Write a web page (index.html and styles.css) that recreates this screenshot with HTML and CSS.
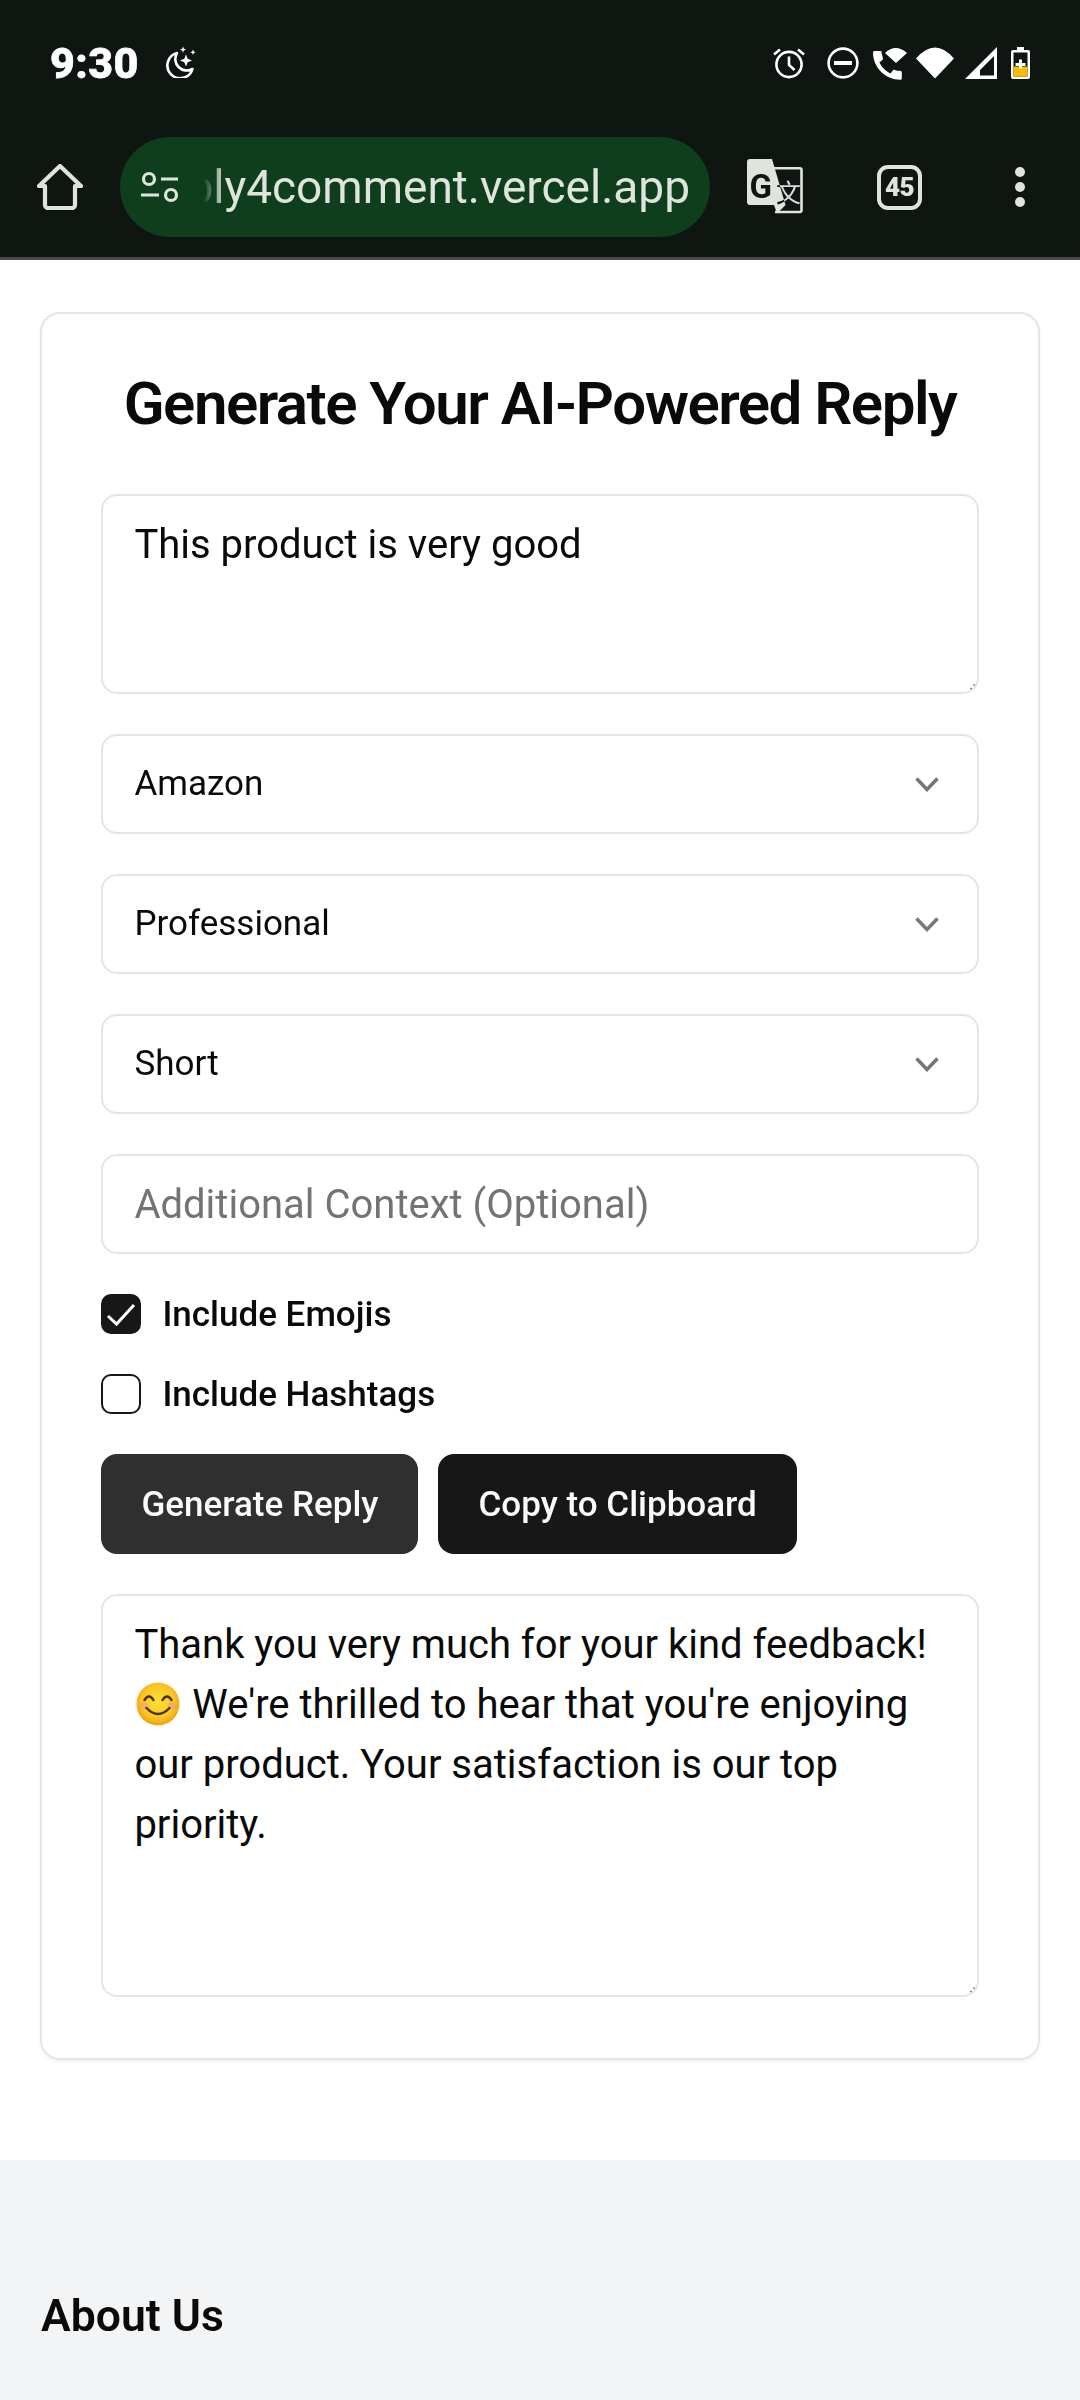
FILE: index.html
```html
<!DOCTYPE html>
<html lang="en">
<head>
<meta charset="utf-8">
<title>Reply4Comment</title>
<link rel="stylesheet" href="styles.css">
</head>
<body>
<header class="chrome">
  <div class="status">
    <span class="time">9:30</span>
    <svg class="ic-moon" viewBox="0 0 30 32"><path d="M11 7A12.800 12.800 0 1 0 26.500 23 11.500 11.500 0 0 1 11 7Z" fill="none" stroke="#fff" stroke-width="2.600" stroke-linejoin="round"/><path d="M20 8.500l1.700 4.300 4.300 1.700-4.300 1.700-1.700 4.300-1.700-4.300-4.300-1.700 4.300-1.700Z" fill="#fff"/><path d="M17 .5l.9 2.200 2.200.9-2.200.9-.9 2.200-.9-2.200-2.200-.9 2.200-.9Z" fill="#fff"/><path d="M27 3.500l.8 2 2 .8-2 .8-.8 2-.8-2-2-.8 2-.8Z" fill="#fff"/></svg>
    <div class="status-icons">
      <svg class="ic-alarm" viewBox="0 0 32 32"><circle cx="16" cy="17.500" r="12.600" fill="none" stroke="#fff" stroke-width="2.600"/><path d="M16 9.500v8.500l5.500 5" fill="none" stroke="#fff" stroke-width="2.600"/><path d="M1 7.500L7 2.500M31 7.500L25 2.500" stroke="#fff" stroke-width="2.600"/></svg>
      <svg class="ic-dnd" viewBox="0 0 32 32"><circle cx="16" cy="16" r="14.400" fill="none" stroke="#fff" stroke-width="2.600"/><rect x="7" y="14" width="18" height="4" fill="#fff"/></svg>
      <svg class="ic-call" viewBox="0 0 36 33"><path transform="translate(0 4) scale(1.600) translate(-3 -3)" d="M20.010 15.380c-1.230 0-2.420-.2-3.530-.56-.35-.12-.74-.03-1.010.24l-1.570 1.970c-2.830-1.350-5.480-3.900-6.890-6.830l1.950-1.660c.27-.28.35-.67.24-1.020-.37-1.110-.56-2.300-.56-3.530 0-.54-.45-.99-.99-.99H4.190C3.650 3 3 3.240 3 3.990 3 13.280 10.730 21 20.010 21c.71 0 .99-.63.99-1.180v-3.450c0-.54-.45-.99-.99-.99z" fill="#fff"/><path d="M11 6Q22-4 34 6L22.500 16.500Z" fill="#0f1511" stroke="#0f1511" stroke-width="4"/><path d="M12 6Q22.500-4 34 6L23 16Z" fill="#fff"/></svg>
      <svg class="ic-wifi" viewBox="0 0 38 32"><path d="M0 11.500Q19-10.500 38 11.500L19 31.500Z" fill="#fff"/></svg>
      <svg class="ic-signal" viewBox="0 0 32 32"><path d="M32 0V32H0Z M29 9L29 28.500 15 28.500 15 23Z" fill="#fff" fill-rule="evenodd"/></svg>
      <svg class="ic-batt" viewBox="0 0 19 32"><path d="M6 0h7v3h4a2 2 0 0 1 2 2v25a2 2 0 0 1-2 2H2a2 2 0 0 1-2-2V5a2 2 0 0 1 2-2h4Z" fill="#fff"/><rect x="2.500" y="5.500" width="14" height="24" fill="#0f1511"/><rect x="2.500" y="19.500" width="14" height="10" fill="#fbbc04"/><path d="M8 12.500h3v3.500h3.500v3H11v2.500H8V19H4.500v-3H8Z" fill="#fff"/></svg>
    </div>
  </div>
  <div class="toolbar">
    <svg class="ic-home" viewBox="0 0 46 46"><path d="M2 22L23 2 44 22H38V41a3 3 0 0 1-3 3H11a3 3 0 0 1-3-3V22Z" fill="none" stroke="#dfe4dc" stroke-width="4.200" stroke-linejoin="round"/></svg>
    <div class="omnibox">
      <svg class="ic-tune" viewBox="0 0 38 32"><circle cx="8" cy="8" r="5.500" fill="none" stroke="#dfe4dc" stroke-width="3.200"/><path d="M20 8H37M0 24H18" stroke="#dfe4dc" stroke-width="3.200"/><circle cx="30" cy="24" r="5.500" fill="none" stroke="#dfe4dc" stroke-width="3.200"/></svg>
      <div class="url"><span>reply4comment.vercel.app</span></div>
    </div>
    <svg class="ic-translate" viewBox="0 0 56 56"><path d="M25 9.300H53a1.500 1.500 0 0 1 1.500 1.500V51.500a1.500 1.500 0 0 1-1.500 1.500H28" fill="none" stroke="#dfe4dc" stroke-width="2.600"/><path d="M3 0H25L38.500 46 30 54.500 27 46H3a3 3 0 0 1-3-3V3a3 3 0 0 1 3-3Z" fill="#dfe4dc"/><text class="tr-g" x="2.500" y="38.500">G</text><text class="tr-x" x="29" y="43">文</text></svg>
    <div class="tabs">45</div>
    <div class="menu"><i></i><i></i><i></i></div>
  </div>
</header>

<main class="page">
  <section class="card">
    <h1 class="title">Generate Your AI-Powered Reply</h1>
    <form class="form">
      <div class="field-area small">
        <textarea class="area" spellcheck="false">This product is very good</textarea>
        <svg class="grip" viewBox="0 0 8 8"><path d="M6 1l1 1-1 1-1-1Z M3 4.500l1 1-1 1-1-1Z" fill="#555"/></svg>
      </div>
      <div class="select-wrap">
        <select class="select"><option>Amazon</option></select>
        <svg class="chev" viewBox="0 0 24 15"><path d="M1.500 1.500L12 12.500 22.500 1.500" fill="none" stroke="#777" stroke-width="3.500"/></svg>
      </div>
      <div class="select-wrap">
        <select class="select"><option>Professional</option></select>
        <svg class="chev" viewBox="0 0 24 15"><path d="M1.500 1.500L12 12.500 22.500 1.500" fill="none" stroke="#777" stroke-width="3.500"/></svg>
      </div>
      <div class="select-wrap">
        <select class="select"><option>Short</option></select>
        <svg class="chev" viewBox="0 0 24 15"><path d="M1.500 1.500L12 12.500 22.500 1.500" fill="none" stroke="#777" stroke-width="3.500"/></svg>
      </div>
      <input class="input" type="text" placeholder="Additional Context (Optional)">
      <label class="check">
        <span class="box on"><svg viewBox="0 0 40 40"><path d="M7 23L15.500 31 33 12" fill="none" stroke="#fff" stroke-width="3"/></svg></span>
        <span>Include Emojis</span>
      </label>
      <label class="check">
        <span class="box"></span>
        <span>Include Hashtags</span>
      </label>
      <div class="actions">
        <button type="button" class="btn soft">Generate Reply</button>
        <button type="button" class="btn">Copy to Clipboard</button>
      </div>
      <div class="field-area result">
        <div class="area-text">Thank you very much for your kind feedback! <svg class="emoji" viewBox="0 0 44 44"><defs><radialGradient id="face" cx="50%" cy="45%" r="55%"><stop offset="0" stop-color="#fde030"/><stop offset="0.7" stop-color="#f9c624"/><stop offset="1" stop-color="#f0a010"/></radialGradient></defs><circle cx="22" cy="22" r="21.500" fill="url(#face)"/><ellipse cx="7.500" cy="24" rx="5" ry="3.500" fill="#f29a7a" opacity=".6"/><ellipse cx="36.500" cy="24" rx="5" ry="3.500" fill="#f29a7a" opacity=".6"/><path d="M8.500 18Q13 11 17.500 18M26.500 18Q31 11 35.500 18M10.500 26Q22 38 33.500 26" fill="none" stroke="#4a3220" stroke-width="2.400" stroke-linecap="round"/></svg> We're thrilled to hear that you're enjoying our product. Your satisfaction is our top priority.</div>
        <svg class="grip" viewBox="0 0 8 8"><path d="M6 1l1 1-1 1-1-1Z M3 4.500l1 1-1 1-1-1Z" fill="#555"/></svg>
      </div>
    </form>
  </section>
</main>

<footer class="about">
  <h2 class="about-title">About Us</h2>
</footer>
</body>
</html>
```

FILE: styles.css
```css
* { box-sizing: border-box; }
html, body { margin: 0; padding: 0; height: 2400px; overflow: hidden; background: #fff; }
body { font-family: Roboto, "Noto Sans", sans-serif; color: #0a0a0a; display: flex; flex-direction: column; }
svg { display: block; flex: none; }

.chrome { background: #0f1511; height: 260px; border-bottom: 3px solid #444a45; flex: none; }
.status { height: 127px; display: flex; align-items: flex-start; padding: 47px 50px 0 50px; }
.time { font-size: 43px; font-weight: 800; line-height: 32px; color: #fff; letter-spacing: .5px; -webkit-text-stroke: .8px #fff; }
.ic-moon { width: 30px; height: 32px; margin-left: 27px; margin-top: -1px; }
.status-icons { margin-left: auto; display: flex; }
.ic-alarm { width: 32px; height: 32px; }
.ic-dnd { width: 32px; height: 32px; margin-left: 22px; }
.ic-call { width: 36px; height: 33px; margin-left: 14px; }
.ic-wifi { width: 38px; height: 32px; margin-left: 7px; }
.ic-signal { width: 32px; height: 32px; margin-left: 11px; }
.ic-batt { width: 19px; height: 32px; margin-left: 14px; }

.toolbar { display: flex; align-items: center; padding: 10px 0 0 37px; height: 110px; }
.ic-home { width: 46px; height: 46px; }
.omnibox { width: 590px; height: 100px; margin-left: 37px; background: #0e3e1c; border-radius: 50px; display: flex; align-items: center; padding: 0 20px 0 21px; color: #dfe4dc; }
.ic-tune { width: 38px; height: 32px; }
.url { position: relative; flex: 1; overflow: hidden; margin-left: 21px; display: flex; justify-content: flex-end; font-size: 46px; line-height: 60px; white-space: nowrap; }
.url::before { content: ""; position: absolute; left: 0; top: 0; bottom: 0; width: 24px; background: linear-gradient(90deg, #0e3e1c 15%, rgba(14,62,28,0)); }
.ic-translate { width: 56px; height: 56px; margin-left: 37px; }
.tr-g { font: 700 33px Roboto, sans-serif; fill: #0f1511; }
.tr-x { font: 400 25px "Noto Sans CJK SC", sans-serif; fill: #eef0ee; mix-blend-mode: difference; }
.tabs { width: 45px; height: 45px; margin-left: 74px; border: 4.200px solid #dfe4dc; border-radius: 11px; color: #dfe4dc; font-size: 26px; font-weight: 900; letter-spacing: -.5px; display: flex; align-items: center; justify-content: center; }
.menu { margin-left: 93px; display: flex; flex-direction: column; gap: 5px; }
.menu i { display: block; width: 10px; height: 10px; border-radius: 50%; background: #dfe4dc; }

.page { padding: 52px 40px 100.500px; flex: none; }
.card { border: 2.600px solid #e5e5e5; border-radius: 20px; padding: 48px 59.400px 60.500px; box-shadow: 0 2px 3px rgba(0,0,0,.05); }
.title { margin: 0 0 48px; text-align: center; font-size: 60px; line-height: 84px; font-weight: 600; letter-spacing: -1.500px; }
.form { display: flex; flex-direction: column; gap: 40px; }

.field-area { position: relative; }
.field-area.small { height: 200px; }
.field-area.result { height: 403px; }
.area, .area-text { display: block; width: 100%; height: 100%; margin: 0; border: 2.600px solid #e5e5e5; border-radius: 16px; padding: 19px 31px 13px; font: 400 40px/60px Roboto, sans-serif; color: #0a0a0a; background: #fff; outline: none; resize: none; }
.grip { position: absolute; right: 3px; bottom: 3px; width: 8px; height: 8px; }
.emoji { display: inline-block; width: 44px; height: 44px; margin: 0 2px; vertical-align: -8px; }

.select-wrap { position: relative; height: 100px; }
.select { appearance: none; -webkit-appearance: none; display: block; width: 100%; height: 100%; margin: 0; border: 2.600px solid #e5e5e5; border-radius: 16px; padding: 0 31px 2px; background: #fff; color: #0a0a0a; font: 400 35px Roboto, sans-serif; outline: none; }
.chev { position: absolute; right: 40px; top: 43px; width: 24px; height: 15px; }
.input { display: block; width: 100%; height: 100px; margin: 0; border: 2.600px solid #e5e5e5; border-radius: 16px; padding: 0 31px; font: 400 40px Roboto, sans-serif; color: #0a0a0a; background: #fff; outline: none; }
.input::placeholder { color: #737373; opacity: 1; }

.check { display: flex; align-items: center; gap: 21px; height: 40px; font-size: 35px; font-weight: 500; }
.box { width: 40px; height: 40px; border: 2.600px solid #171717; border-radius: 10px; background: #fff; flex: none; }
.box.on { background: #171717; position: relative; }
.box.on svg { position: absolute; left: -2.600px; top: -2.600px; width: 40px; height: 40px; }

.actions { display: flex; gap: 20px; }
.btn { height: 100px; border: 0; border-radius: 16px; padding: 0 40px; background: #171717; color: #fafafa; font: 500 35px Roboto, sans-serif; }
.btn.soft { background: #2f2f2f; }

.about { flex: 1; background: #f3f4f6; padding: 128px 41px 0; }
.about-title { margin: 0; font-size: 44.500px; line-height: 56px; font-weight: 600; }
```
